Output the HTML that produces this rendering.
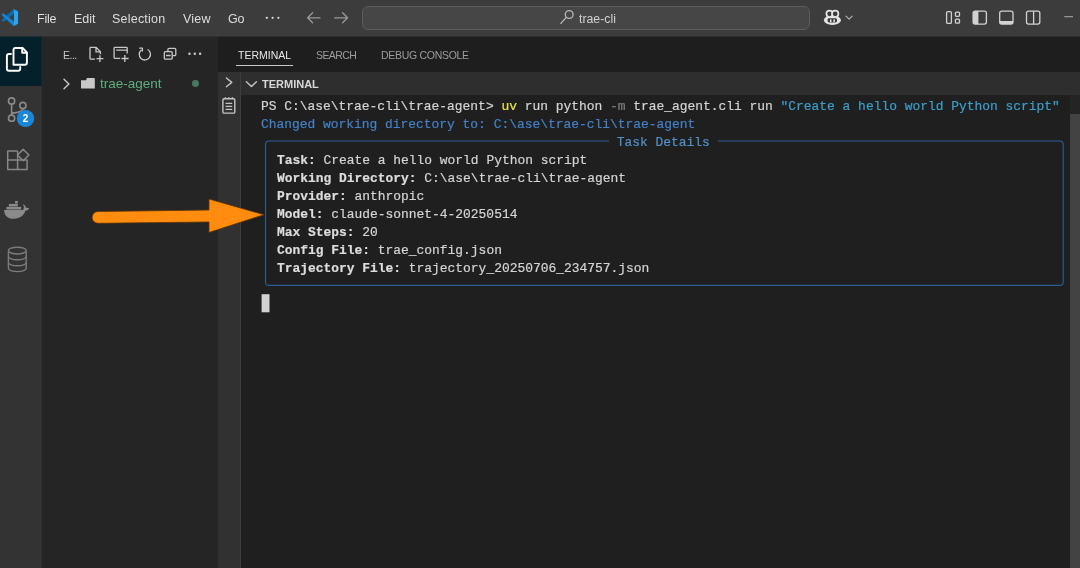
<!DOCTYPE html>
<html lang="en">
<head>
<meta charset="utf-8">
<title>trae-cli - Visual Studio Code</title>
<style>
*{box-sizing:border-box;margin:0;padding:0}
html,body{width:1080px;height:568px;overflow:hidden;background:#1f1f1f}
body{position:relative;font-family:"Liberation Sans",sans-serif;font-size:13px;color:#cccccc}
.abs{position:absolute}
.mono,.menu,.ui,.badge{will-change:transform}
#titlebar{left:0;top:0;width:1080px;height:36px;background:#3c3c3c}
#activity{left:0;top:36px;width:41px;height:532px;background:#333333}
#act-active{left:0;top:36px;width:41px;height:50px;background:#04212b}
#sidebar{left:41px;top:36px;width:177px;height:532px;background:#252526}
#paneltabs{left:218px;top:36px;width:862px;height:36px;background:#1e1e1e}
#termhead{left:218px;top:72px;width:862px;height:23px;background:#2e2e2e}
#leftcol{left:218px;top:72px;width:23px;height:496px;background:#313131;border-right:1px solid #3e3e3e}
#term{left:241px;top:95px;width:829px;height:473px;background:#1f1f1f}
#scroll{left:1070px;top:95px;width:10px;height:473px;background:#434343;border-top:19px solid #242424}
.menu{top:10.7px;font-size:12.5px;color:#dedede;line-height:16px;white-space:nowrap}
.ui{white-space:nowrap;line-height:14px}
.mono{font-family:"Liberation Mono",monospace;font-size:12.93px;line-height:18px;white-space:pre;color:#d4d4d4;height:18px}
.mono{-webkit-text-stroke:0.2px currentColor}
.mono b{font-weight:bold;color:#dcdcdc}
</style>
</head>
<body>
<div class="abs" id="titlebar"></div>
<div class="abs" id="activity"></div>
<div class="abs" id="act-active"></div>
<div class="abs" id="sidebar"></div>
<div class="abs" style="left:41px;top:36px;width:1px;height:532px;background:#2d2d2e"></div>
<div class="abs" style="left:41px;top:36px;width:1px;height:50px;background:#12232a"></div>
<div class="abs" id="paneltabs"></div>
<div class="abs" id="termhead"></div>
<div class="abs" id="leftcol"></div>
<div class="abs" id="term"></div>
<div class="abs" id="scroll"></div>

<div class="abs" style="left:0;top:36px;width:41px;height:1px;background:#202e33"></div>
<div class="abs" style="left:41px;top:36px;width:177px;height:1px;background:#303031"></div>
<div class="abs" style="left:218px;top:36px;width:862px;height:1px;background:#2d2d2d"></div>
<!-- title bar -->
<div class="abs menu" style="left:37.2px;letter-spacing:-0.2px">File</div>
<div class="abs menu" style="left:74px">Edit</div>
<div class="abs menu" style="left:112.4px;letter-spacing:0.22px">Selection</div>
<div class="abs menu" style="left:183.2px;letter-spacing:0.2px">View</div>
<div class="abs menu" style="left:227.8px;letter-spacing:-0.1px">Go</div>

<div class="abs" style="left:362px;top:6px;width:448px;height:24px;background:#464646;border:1px solid #5c5c5c;border-radius:6px"></div>
<div class="abs ui" style="left:579.3px;top:12.2px;font-size:12.3px;color:#d0d0d0">trae-cli</div>

<!-- sidebar -->
<div class="abs ui" style="left:62.6px;top:47.9px;font-size:10.5px;letter-spacing:-0.5px;color:#c5c5c5">E...</div>
<div class="abs ui" style="left:100.2px;top:77.2px;font-size:13.5px;color:#5fae7c">trae-agent</div>
<div class="abs" style="left:192.3px;top:79.9px;width:6.8px;height:6.8px;border-radius:50%;background:#4a7762"></div>

<!-- panel tabs -->
<div class="abs ui" style="left:237.8px;top:48px;font-size:10.5px;color:#e7e7e7">TERMINAL</div>
<div class="abs" style="left:235.8px;top:65px;width:57px;height:1.2px;background:#c8c8c8"></div>
<div class="abs ui" style="left:315.8px;top:48px;font-size:10.5px;letter-spacing:-0.58px;color:#9d9d9d">SEARCH</div>
<div class="abs ui" style="left:381.4px;top:48px;font-size:10.5px;letter-spacing:-0.29px;color:#9d9d9d">DEBUG CONSOLE</div>
<div class="abs ui" style="left:261.8px;top:76.9px;font-size:11px;font-weight:bold;color:#d8d8d8">TERMINAL</div>

<!-- terminal text -->
<div class="abs mono" style="left:261px;top:98px">PS C:\ase\trae-cli\trae-agent&gt; <span style="color:#e6e04e">uv</span> run python <span style="color:#7e7e7e">-m</span> trae_agent.cli run <span style="color:#3d9fcb">"Create a hello world Python script"</span></div>
<div class="abs mono" style="left:261px;top:116px;color:#4480c6">Changed working directory to: C:\ase\trae-cli\trae-agent</div>
<svg class="abs" style="left:0;top:130px" width="1080" height="190" viewBox="0 130 1080 190" fill="none"><rect x="261.6" y="294.2" width="7.9" height="18.1" fill="#d2d2d2"/><rect x="265.5" y="141" width="797.7" height="144.4" rx="3.5" stroke="#2e5e94" stroke-width="1.1"/></svg>
<div class="abs mono" style="left:609px;top:134px;color:#5290c6;background:#1f1f1f"> Task Details </div>
<div class="abs mono" style="left:277.2px;top:152px"><b>Task:</b> Create a hello world Python script</div>
<div class="abs mono" style="left:277.2px;top:170px"><b>Working Directory:</b> C:\ase\trae-cli\trae-agent</div>
<div class="abs mono" style="left:277.2px;top:188px"><b>Provider:</b> anthropic</div>
<div class="abs mono" style="left:277.2px;top:206px"><b>Model:</b> claude-sonnet-4-20250514</div>
<div class="abs mono" style="left:277.2px;top:224px"><b>Max Steps:</b> 20</div>
<div class="abs mono" style="left:277.2px;top:242px"><b>Config File:</b> trae_config.json</div>
<div class="abs mono" style="left:277.2px;top:260px"><b>Trajectory File:</b> trajectory_20250706_234757.json</div>



<!-- icons overlay -->
<svg class="abs" style="left:0;top:0" width="1080" height="568" viewBox="0 0 1080 568" fill="none">
<!-- vscode logo -->
<g transform="translate(1.6 9.3) scale(0.165)">
<path d="M96.5 10.8 L75.9 0.9 C73.5 -0.3 70.7 0.2 68.8 2.1 L1.3 63.6 C-0.5 65.3 -0.5 68.2 1.4 69.8 L6.9 74.8 C8.4 76.2 10.6 76.3 12.2 75.1 L93.4 13.5 C96.1 11.4 100 13.4 100 16.8 V16.6 C100 14.1 98.6 11.9 96.5 10.8 Z" fill="#0a6db5"/>
<path d="M96.5 89.2 L75.9 99.1 C73.5 100.3 70.7 99.8 68.8 97.9 L1.3 36.4 C-0.5 34.7 -0.5 31.8 1.4 30.2 L6.9 25.2 C8.4 23.8 10.6 23.7 12.2 24.9 L93.4 86.5 C96.1 88.6 100 86.6 100 83.2 V83.4 C100 85.9 98.6 88.1 96.5 89.2 Z" fill="#1583d2"/>
<path d="M75.9 99.1 C73.5 100.3 70.7 99.8 68.8 97.9 C71.1 100.2 75 98.6 75 95.3 V4.7 C75 1.4 71.1 -0.2 68.8 2.1 C70.7 0.2 73.5 -0.3 75.9 0.9 L96.5 10.8 C98.6 11.8 100 14 100 16.4 V83.6 C100 86 98.6 88.2 96.5 89.2 L75.9 99.1 Z" fill="#2ea3ef"/>
</g>
<g fill="#dadada"><circle cx="266.8" cy="17.8" r="1.15"/><circle cx="272.6" cy="17.8" r="1.15"/><circle cx="278.4" cy="17.8" r="1.15"/></g>
<!-- nav arrows -->
<g stroke="#979797" stroke-width="1.35" stroke-linecap="round" stroke-linejoin="round">
<path d="M320 17.8H307.8M312.6 12.8L307.6 17.8L312.6 22.8"/>
<path d="M334.6 17.8H347.4M342.6 12.8L347.6 17.8L342.6 22.8"/>
</g>
<!-- search icon -->
<g stroke="#b8b8b8" stroke-width="1.35" stroke-linecap="round">
<circle cx="569.2" cy="14.5" r="3.9"/><path d="M566.3 17.4L560.9 23.4"/>
</g>
<!-- copilot -->
<ellipse cx="832.4" cy="20.2" rx="8.5" ry="4.8" fill="#e6e6e6"/>
<circle cx="829.6" cy="13.8" r="3.2" fill="#3b3b3b" stroke="#e6e6e6" stroke-width="1.7"/>
<circle cx="835.2" cy="13.8" r="3.2" fill="#3b3b3b" stroke="#e6e6e6" stroke-width="1.7"/>
<rect x="827.6" y="18.2" width="9.4" height="4.2" rx="1.4" fill="#3b3b3b"/>
<rect x="830" y="19.4" width="1.5" height="2.7" fill="#e6e6e6"/><rect x="833.4" y="19.4" width="1.5" height="2.7" fill="#e6e6e6"/>
<path d="M846 16.1L849.1 19.1L852.2 16.1" stroke="#b0b0b0" stroke-width="1.2" stroke-linecap="round" stroke-linejoin="round"/>
<!-- layout icons -->
<g stroke="#d2d2d2" stroke-width="1.3">
<rect x="946.6" y="11.6" width="4.8" height="11.8" rx="1.2"/>
<rect x="955.4" y="12.2" width="4.1" height="4.1" rx="1"/>
<rect x="955.4" y="19.1" width="4.1" height="4.1" rx="1"/>
<rect x="973.1" y="11.1" width="13.3" height="13" rx="2"/>
<rect x="999.7" y="11.1" width="13.3" height="13" rx="2"/>
<rect x="1026.5" y="11.1" width="13.3" height="13" rx="2"/>
<path d="M1033.6 11.1V24.1"/>
</g>
<path d="M973.1 13.1a2 2 0 0 1 2-2H978.4V24.1H975.1a2 2 0 0 1-2-2Z" fill="#d2d2d2"/>
<path d="M999.7 21H1013V22.1a2 2 0 0 1-2 2H1001.7a2 2 0 0 1-2-2Z" fill="#d2d2d2"/>
<path d="M1064.3 16.7H1073" stroke="#a4a4a4" stroke-width="1.1"/>

<!-- activity: files -->
<g stroke="#ffffff" stroke-width="1.9" stroke-linejoin="round" stroke-linecap="round">
<path d="M13.5 64.7V50a2 2 0 0 1 2-2H22.6L26.9 52.3V62.7a2 2 0 0 1-2 2Z" />
<path d="M22.2 48.4V52.7H26.6"/>
<path d="M11 54H8.9a2 2 0 0 0-2 2V68.8a2 2 0 0 0 2 2H18.2a2 2 0 0 0 2-2V67"/>
</g>
<!-- activity: source control -->
<g stroke="#8a8a8a" stroke-width="1.6">
<circle cx="11.6" cy="101" r="3.1"/><circle cx="11.6" cy="118.2" r="3.1"/><circle cx="22.9" cy="105.5" r="3.1"/>
<path d="M11.6 104.1V115.1M22.9 108.6C22.9 112.5 17 112.4 11.8 113.2"/>
</g>
<circle cx="25.5" cy="118.4" r="8.7" fill="#1a86d6"/>
<!-- activity: extensions -->
<g stroke="#868686" stroke-width="1.5" stroke-linejoin="round">
<path d="M17.6 150.9H7.7V169.6H27.1V159.9H7.7M17.6 150.9V169.6"/>
<path d="M23.2 149.3L28.9 155L23.2 160.7L17.5 155Z"/>
</g>
<!-- activity: docker -->
<g fill="#8a8a8a">
<path d="M4 210H22.6C23.4 209.6 24 208.4 23.8 206.4C23.6 205.6 23.2 205 22.9 204.7C23.3 204.5 23.9 204.4 24.4 204.9C25.3 205.6 25.8 206.8 25.8 207.8C26.8 207.5 28.2 207.6 29.2 208.2C28.6 209.5 27.2 210.5 25.6 210.6C24.2 214.8 20.6 218.8 13.6 218.8C7.6 218.8 4.4 215.4 4 210Z"/>
<rect x="6.4" y="206.9" width="14.8" height="2.6"/>
<rect x="8.8" y="203.9" width="9" height="2.6"/>
<rect x="15.1" y="200.9" width="2.7" height="2.6"/>
</g>
<!-- activity: database -->
<g stroke="#7c7c7c" stroke-width="1.4">
<ellipse cx="17.3" cy="250.6" rx="8.9" ry="3.4"/>
<path d="M8.4 250.6V268.2C8.4 270.1 12.4 271.6 17.3 271.6C22.2 271.6 26.2 270.1 26.2 268.2V250.6"/>
<path d="M8.4 256.4C8.4 258.3 12.4 259.8 17.3 259.8C22.2 259.8 26.2 258.3 26.2 256.4"/>
<path d="M8.4 262.4C8.4 264.3 12.4 265.8 17.3 265.8C22.2 265.8 26.2 264.3 26.2 262.4"/>
</g>

<!-- sidebar header icons -->
<g stroke="#c8c8c8" stroke-width="1.3" stroke-linejoin="round" stroke-linecap="butt">
<!-- new file -->
<path d="M94.9 59.2H90.8a0.8 0.8 0 0 1-.8-.8V48.2a0.8 0.8 0 0 1 .8-.8H96.2L100.4 51.7V54.2M96 47.6V51.9H100.2M99.9 55.2V62M96.5 58.7H103.4"/>
<!-- new folder -->
<path d="M120.2 58.4H114.9a0.8 0.8 0 0 1-.8-.8V48.2a0.8 0.8 0 0 1 .8-.8H126.4a0.8 0.8 0 0 1 .8 .8V53.4M116.2 50.2H127.2M124.8 55V62M121.5 58.5H128.6"/>
<!-- refresh -->
<path d="M147.6 49.5A5.6 5.6 0 1 1 141.4 50M139.2 48.2H142.4V51.4"/>
<!-- collapse all -->
<rect x="164.3" y="51.6" width="7.9" height="7.6" rx="1.2"/>
<path d="M167.9 51.4V49.6a1.2 1.2 0 0 1 1.2-1.2H174.6a1.2 1.2 0 0 1 1.2 1.2V54.4a1.2 1.2 0 0 1-1.2 1.2H172.4M166 55.5H170.6"/>
</g>
<g fill="#cdcdcd"><circle cx="189.5" cy="53.7" r="1.2"/><circle cx="194.8" cy="53.7" r="1.2"/><circle cx="200.1" cy="53.7" r="1.2"/></g>
<!-- tree row -->
<path d="M64 79.2L68.9 84L64 88.8" stroke="#c8c8c8" stroke-width="1.4" stroke-linecap="round" stroke-linejoin="round"/>
<path d="M81 80.3H86L87 78H94.2a0.6 0.6 0 0 1 .6 .6V88.5H81Z" fill="#c8c8c8"/>

<!-- panel chevrons -->
<path d="M226.4 78L231.8 82.4L226.4 86.8" stroke="#c4c4c4" stroke-width="1.4" stroke-linecap="round" stroke-linejoin="round"/>
<path d="M246.4 81.8L251.4 86.6L256.4 81.8" stroke="#c4c4c4" stroke-width="1.4" stroke-linecap="round" stroke-linejoin="round"/>
<!-- clipboard icon -->
<g stroke="#c4c4c4" stroke-width="1.4" stroke-linejoin="round">
<rect x="222.9" y="98.8" width="11.9" height="14.3" rx="1.2"/>
<path d="M225.6 103.4H232.2M225.6 106.4H232.2M225.6 109.4H232.2"/>
<path d="M225.4 97.2V99M228.9 97.2V99M232.4 97.2V99" stroke-width="1.4"/>
</g>
</svg>
<div class="abs badge" style="left:21px;top:112.8px;width:9px;text-align:center;font-size:10px;font-weight:bold;color:#ffffff;line-height:11px">2</div>

<!-- arrow -->
<svg class="abs" style="left:80px;top:180px" width="200" height="70" viewBox="80 180 200 70">
<path d="M98 211.5 L209 210 L209 199 L264 214.7 L209 232.5 L209 222 L98 223.3 A5.9 5.9 0 0 1 98 211.5 Z" fill="#ff8c0e" stroke="#5a3208" stroke-width="0.8" stroke-linejoin="round"/>
</svg>
</body>
</html>
